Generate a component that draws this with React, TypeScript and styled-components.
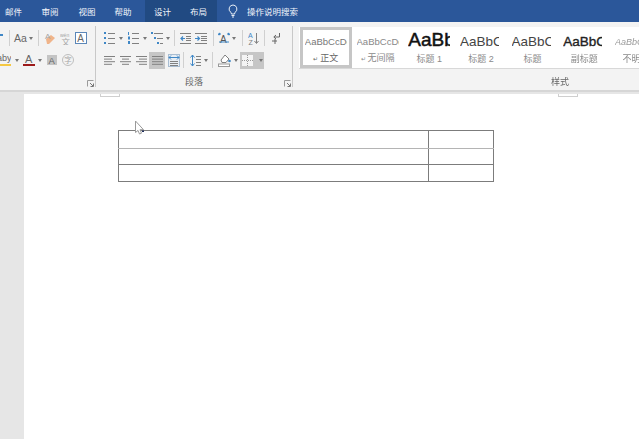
import React from "react";
import styled, { createGlobalStyle } from "styled-components";

const Global = createGlobalStyle`
  html, body {
    margin: 0;
    width: 639px;
    height: 439px;
    overflow: hidden;
    background: #fff;
    font-family: "Liberation Sans", "Noto Sans CJK SC", sans-serif;
  }
`;

const Window = styled.div`
  position: relative;
  width: 639px;
  height: 439px;
  display: flex;
  flex-direction: column;
  overflow: hidden;
`;

const TabBar = styled.div`
  height: 22px;
  flex: none;
  display: flex;
  align-items: center;
  background: #2b579a;
  color: #f2f5fa;
  font-size: 8.5px;
`;

const Tab = styled.div<{ $w: number; $active?: boolean }>`
  width: ${(p) => p.$w}px;
  height: 100%;
  display: flex;
  align-items: center;
  justify-content: center;
  background: ${(p) => (p.$active ? "#214a82" : "transparent")};
`;

const ActiveTabs = styled.div`
  display: flex;
  height: 100%;
`;

const Search = styled.div`
  display: flex;
  align-items: center;
  gap: 9px;
  margin-left: 11px;
`;

const Ribbon = styled.div`
  height: 70px;
  flex: none;
  box-sizing: border-box;
  padding-top: 4px;
  display: flex;
  background: #f3f3f3;
  border-bottom: 2px solid #d6d6d6;
  filter: blur(0.3px);
`;

const Group = styled.div<{ $w: number }>`
  width: ${(p) => p.$w}px;
  height: 61px;
  flex: none;
  box-sizing: border-box;
  border-right: 1px solid #c8c8c8;
  display: flex;
  flex-direction: column;
  overflow: hidden;
`;

const StyleGroup = styled.div`
  flex: none;
  width: 522px;
  padding-left: 6px;
  display: flex;
  flex-direction: column;
`;

const Row = styled.div<{ $pl?: number }>`
  height: 22px;
  flex: none;
  display: flex;
  align-items: center;
  padding-left: ${(p) => p.$pl ?? 0}px;
  &:first-child {
    margin-top: 1px;
  }
`;

const Footer = styled.div`
  position: relative;
  flex: 1;
  display: flex;
  align-items: center;
  justify-content: center;
  color: #666;
  font-size: 9px;
  line-height: 10px;
  padding-top: 6px;
`;

const StyleFooter = styled(Footer)`
  box-sizing: border-box;
  height: 18px;
  flex: none;
  padding-top: 8px;
`;

const Launcher = styled.svg`
  position: absolute;
  right: 1px;
  bottom: 0;
  width: 7px;
  height: 7px;
`;

const Icon = styled.svg<{ $ml?: number }>`
  flex: none;
  display: block;
  margin-left: ${(p) => p.$ml ?? 0}px;
`;

const Sep = styled.div<{ $ml: number }>`
  width: 1px;
  height: 16px;
  flex: none;
  background: #d0d0d0;
  margin-left: ${(p) => p.$ml}px;
`;

const Caret = styled.div<{ $ml: number }>`
  flex: none;
  width: 0;
  height: 0;
  margin-left: ${(p) => p.$ml}px;
  border-left: 2.5px solid transparent;
  border-right: 2.5px solid transparent;
  border-top: 3px solid #777;
`;

const FontCase = styled.div`
  width: 13px;
  margin-left: 4px;
  font-size: 10.5px;
  color: #666;
  flex: none;
`;

const Selected = styled.div<{ $ml: number; $w: number }>`
  flex: none;
  width: ${(p) => p.$w}px;
  height: 17px;
  margin-left: ${(p) => p.$ml}px;
  display: flex;
  align-items: center;
  background: #c6c6c6;
`;

const Gallery = styled.div`
  height: 42px;
  flex: none;
  display: flex;
  box-sizing: border-box;
  padding-left: 1px;
  background: #fff;
  border-bottom: 1px solid #d8d8d8;
  overflow: hidden;
  margin-top: 1px;
`;

const StyleItem = styled.div<{ $selected?: boolean }>`
  width: 51.7px;
  flex: none;
  box-sizing: border-box;
  display: flex;
  flex-direction: column;
  align-items: center;
  border: 3px solid ${(p) => (p.$selected ? "#c6c6c6" : "transparent")};
`;

const Preview = styled.div<{
  $size: number;
  $clip?: number;
  $lift?: number;
  $stroke?: number;
  $color?: string;
  $italic?: boolean;
}>`
  box-sizing: border-box;
  width: ${(p) => p.$clip ?? 42}px;
  margin-right: ${(p) => 42 - (p.$clip ?? 42)}px;
  height: 24px;
  padding-bottom: ${(p) => p.$lift ?? 0}px;
  overflow: hidden;
  white-space: nowrap;
  display: flex;
  align-items: center;
  font-size: ${(p) => p.$size}px;
  -webkit-text-stroke: ${(p) => p.$stroke ?? 0}px ${(p) => p.$color ?? "#777"};
  color: ${(p) => p.$color ?? "#777"};
  font-style: ${(p) => (p.$italic ? "italic" : "normal")};
`;

const StyleLabel = styled.div<{ $selected?: boolean }>`
  margin-top: 1px;
  font-size: 9px;
  line-height: 11px;
  color: ${(p) => (p.$selected ? "#666" : "#8a8a8a")};
  white-space: nowrap;
`;

const Mark = styled.span`
  font-size: 6px;
  margin-right: 2px;
`;

const Workspace = styled.div`
  flex: 1;
  display: flex;
  background: #e6e6e6;
  padding: 2px 0 0 24px;
  min-height: 0;
`;

const Page = styled.div`
  position: relative;
  flex: 1;
  background: #fff;
  padding: 36px 0 0 94px;
`;

const Corner = styled.div<{ $left: number }>`
  position: absolute;
  top: 0;
  left: ${(p) => p.$left}px;
  width: 18px;
  height: 2px;
  border: 1px solid #cfcfcf;
  border-top: none;
`;

const Grid = styled.table`
  border-collapse: collapse;
  table-layout: fixed;
  width: 376px;
`;

const Cell = styled.td<{ $w?: number; $h: number; $soft?: boolean }>`
  box-sizing: border-box;
  padding: 0;
  height: ${(p) => p.$h}px;
  width: ${(p) => (p.$w ? `${p.$w}px` : "auto")};
  border: 1px solid #7c7c7c;
  border-bottom-color: ${(p) => (p.$soft ? "#b4b4b4" : "#7c7c7c")};
`;

const Pointer = styled.svg`
  position: absolute;
  left: 134px;
  top: 120px;
  width: 12px;
  height: 16px;
`;

const GRAY = "#808080";
const LIGHT = "#a5a5a5";
const BLUE = "#3f87c6";

const Lines = ({ w, items }: { w: number; items: [number, number, number][] }) => (
  <>
    {items.map(([x, y, len], i) => (
      <rect key={i} x={x} y={y} width={Math.min(len, w - x)} height={1} fill={GRAY} />
    ))}
  </>
);

const AlignIcon = ({ ml, kind }: { ml: number; kind: "left" | "center" | "right" | "full" }) => {
  const rows =
    kind === "left"
      ? [[0, 11], [0, 8], [0, 11], [0, 8]]
      : kind === "center"
      ? [[0, 11], [2, 7], [0, 11], [2, 7]]
      : kind === "right"
      ? [[0, 11], [3, 8], [0, 11], [3, 8]]
      : [[0, 11], [0, 11], [0, 11], [0, 11]];
  return (
    <Icon $ml={ml} width={11} height={10} viewBox="0 0 11 10">
      {rows.map(([x, l], i) => (
        <rect key={i} x={x} y={1 + i * 2.6} width={l} height={1} fill={GRAY} />
      ))}
    </Icon>
  );
};

const Corner7 = () => (
  <Launcher viewBox="0 0 7 7">
    <path d="M.5 6.500V.5h6" fill="none" stroke="#9a9a9a" />
    <path d="M3 3l3 3M6.500 3.500v3h-3" fill="none" stroke="#777" />
  </Launcher>
);

const styles = [
  { mark: true, label: "正文", text: "AaBbCcDd", size: 9.5, selected: true },
  { mark: true, label: "无间隔", text: "AaBbCcDd", size: 9.5, color: "#888" },
  { label: "标题 1", text: "AaBb", size: 19, stroke: 0.5, color: "#111", lift: 3 },
  { label: "标题 2", text: "AaBbC", size: 13.5, clip: 39, color: "#444" },
  { label: "标题", text: "AaBbC", size: 13.5, clip: 39, color: "#444" },
  { label: "副标题", text: "AaBbC", size: 13.5, clip: 39, stroke: 0.35, color: "#222" },
  { label: "不明显", text: "AaBbCcDd", size: 9, color: "#999", italic: true },
];

export default function App() {
  return (
    <Window>
      <Global />
      <TabBar>
        <Tab $w={27}>邮件</Tab>
        <Tab $w={46}>审阅</Tab>
        <Tab $w={28}>视图</Tab>
        <Tab $w={44}>帮助</Tab>
        <ActiveTabs>
          <Tab $w={35} $active>设计</Tab>
          <Tab $w={37} $active>布局</Tab>
        </ActiveTabs>
        <Search>
          <svg width="10" height="14" viewBox="0 0 10 14">
            <path d="M5 1a4 4 0 0 0-2.300 7.200c.5.5.7 1 .7 1.800h3.200c0-.8.2-1.300.7-1.800A4 4 0 0 0 5 1z" fill="none" stroke="#e8eef6" />
            <path d="M3.500 11.500h3M4 13h2" stroke="#e8eef6" />
          </svg>
          <span>操作说明搜索</span>
        </Search>
      </TabBar>

      <Ribbon>
        <Group $w={96}>
          <Row>
            <Icon width={4} height={10} viewBox="0 0 4 10">
              <rect x={0} y={1} width={3} height={2} fill={BLUE} />
            </Icon>
            <Sep $ml={5} />
            <FontCase>Aa</FontCase>
            <Caret $ml={2} />
            <Sep $ml={5} />
            <Icon $ml={5} width={12} height={13} viewBox="0 0 12 13">
              <path d="M2 7l5-4 4 3-6 6H3z" fill="#f0b48a" />
              <text x={1} y={7} fontSize={8} fill={LIGHT}>A</text>
            </Icon>
            <Icon $ml={4} width={12} height={14} viewBox="0 0 12 14">
              <text x={0} y={5.500} fontSize={5} fill={LIGHT}>wén</text>
              <text x={1.500} y={13.500} fontSize={8.500} fill={LIGHT}>文</text>
            </Icon>
            <Icon $ml={3} width={12} height={12} viewBox="0 0 12 12">
              <rect x={0.5} y={0.5} width={11} height={11} fill="#fff" stroke="#5b87b8" />
              <text x={2.200} y={9.800} fontSize={10} fill="#666">A</text>
            </Icon>
          </Row>
          <Row>
            <Icon width={11} height={14} viewBox="0 0 11 14">
              <text x={-3} y={8} fontSize={9} fill="#666">aby</text>
              <rect x={0} y={11} width={11} height={2} fill="#f5c842" />
            </Icon>
            <Caret $ml={4} />
            <Icon $ml={4} width={12} height={14} viewBox="0 0 12 14">
              <text x={2} y={10} fontSize={11} fill="#666">A</text>
              <rect x={0} y={11} width={12} height={2} fill="#9c1a1a" />
            </Icon>
            <Caret $ml={3} />
            <Icon $ml={5} width={10} height={10} viewBox="0 0 10 10">
              <rect width={10} height={10} fill="#c4c4c4" />
              <text x={1.500} y={8.800} fontSize={9.500} fill="#666">A</text>
            </Icon>
            <Icon $ml={5} width={12} height={12} viewBox="0 0 12 12">
              <circle cx={6} cy={6} r={5.500} fill="none" stroke="#bdbdbd" />
              <text x={2.200} y={9} fontSize={7.500} fill={LIGHT}>字</text>
            </Icon>
          </Row>
          <Footer>
            <Corner7 />
          </Footer>
        </Group>

        <Group $w={197}>
          <Row $pl={8}>
            <Icon width={11} height={12} viewBox="0 0 11 12">
              <rect x={0} y={0} width={2} height={2} fill={BLUE} />
              <rect x={0} y={5} width={2} height={2} fill={BLUE} />
              <rect x={0} y={10} width={2} height={2} fill={BLUE} />
              <Lines w={11} items={[[4, 1, 7], [4, 6, 7], [4, 11, 7]]} />
            </Icon>
            <Caret $ml={4} />
            <Icon $ml={5} width={11} height={12} viewBox="0 0 11 12">
              <rect x={0} y={0} width={1} height={3} fill={BLUE} />
              <rect x={0} y={4.500} width={2} height={3} fill={BLUE} />
              <rect x={0} y={9} width={2} height={3} fill={BLUE} />
              <Lines w={11} items={[[4, 1, 7], [4, 6, 7], [4, 11, 7]]} />
            </Icon>
            <Caret $ml={4} />
            <Icon $ml={4} width={12} height={12} viewBox="0 0 12 12">
              <rect x={0} y={0} width={2} height={2} fill={BLUE} />
              <rect x={3} y={5} width={2} height={2} fill={BLUE} />
              <rect x={6} y={10} width={2} height={2} fill={BLUE} />
              <Lines w={12} items={[[3, 1, 9], [6, 6, 6], [9, 11, 3]]} />
            </Icon>
            <Caret $ml={3} />
            <Sep $ml={4} />
            <Icon $ml={5} width={11} height={11} viewBox="0 0 11 11">
              <Lines w={11} items={[[0, 0, 11], [6, 3, 5], [6, 5, 5], [6, 7, 5], [0, 10, 11]]} />
              <path d="M5 5.500H1M3 3.500l-2 2 2 2" fill="none" stroke={BLUE} strokeWidth={1.200} />
            </Icon>
            <Icon $ml={4} width={12} height={11} viewBox="0 0 12 11">
              <Lines w={12} items={[[0, 0, 12], [6, 3, 6], [6, 5, 6], [6, 7, 6], [0, 10, 12]]} />
              <path d="M0 5.500h4M2.500 3.500l2 2-2 2" fill="none" stroke={BLUE} strokeWidth={1.200} />
            </Icon>
            <Sep $ml={6} />
            <Icon $ml={4} width={12} height={12} viewBox="0 0 12 12">
              <text x={2} y={10.500} fontSize={10} fill="#555">A</text>
              <path d="M0 3l2-1.500M12 3l-2-1.500M1 10h10" stroke={BLUE} fill="none" />
              <circle cx={1.500} cy={2} r={1.200} fill={BLUE} />
              <circle cx={10.500} cy={2} r={1.200} fill={BLUE} />
            </Icon>
            <Caret $ml={2} />
            <Sep $ml={6} />
            <Icon $ml={5} width={11} height={13} viewBox="0 0 11 13">
              <text x={0} y={6} fontSize={7} fill={BLUE}>A</text>
              <text x={0.500} y={13} fontSize={7} fill={GRAY}>Z</text>
              <path d="M8.500 1v10M6.500 9l2 2.500 2-2.500" fill="none" stroke={GRAY} />
            </Icon>
            <Sep $ml={5} />
            <Icon $ml={7} width={8} height={11} viewBox="0 0 8 11">
              <path d="M7.500 0v4H2M4 2L1.800 4 4 6" fill="none" stroke="#666" />
              <path d="M0 8h5M3 6v5" stroke="#666" />
            </Icon>
          </Row>
          <Row $pl={8}>
            <AlignIcon ml={0} kind="left" />
            <AlignIcon ml={5} kind="center" />
            <AlignIcon ml={5} kind="right" />
            <Selected $ml={2} $w={16}>
              <AlignIcon ml={3} kind="full" />
            </Selected>
            <Icon $ml={3} width={12} height={13} viewBox="0 0 12 13">
              <rect x={0.5} y={0.5} width={11} height={12} fill="#e8eef4" stroke="#a8bdd2" />
              <Lines w={12} items={[[2, 7, 8], [2, 9, 8], [2, 11, 8]]} />
              <path d="M1 3.500h10M3 1.500L1 3.500l2 2M9 1.500l2 2-2 2" fill="none" stroke={BLUE} />
            </Icon>
            <Sep $ml={3} />
            <Icon $ml={6} width={11} height={13} viewBox="0 0 11 13">
              <path d="M2.500 1v11M.5 3.500l2-2.500 2 2.500M.5 9.500l2 2.500 2-2.500" fill="none" stroke={BLUE} />
              <Lines w={11} items={[[6, 2, 5], [6, 5, 5], [6, 8, 5], [6, 11, 5]]} />
            </Icon>
            <Caret $ml={3} />
            <Sep $ml={4} />
            <Icon $ml={5} width={13} height={14} viewBox="0 0 13 14">
              <path d="M3 7l4-5 4 4-3 3.500H4z" fill="#fff" stroke={GRAY} />
              <circle cx={11.500} cy={8} r={1.300} fill={BLUE} />
              <rect x={0.5} y={11} width={11} height={2.500} fill="#fff" stroke="#999" />
            </Icon>
            <Caret $ml={3} />
            <Selected $ml={2} $w={24}>
              <Icon $ml={2} width={11} height={11} viewBox="0 0 11 11">
                <rect width={11} height={11} fill="#f4f4f4" />
                <path d="M5.500 0v11M0 5.500h11" stroke="#9a9a9a" strokeDasharray="1 1" />
              </Icon>
              <Caret $ml={6} />
            </Selected>
          </Row>
          <Footer>
            段落
            <Corner7 />
          </Footer>
        </Group>

        <StyleGroup>
          <Gallery>
            {styles.map((s) => (
              <StyleItem key={s.label} $selected={s.selected}>
                <Preview
                  $size={s.size}
                  $clip={s.clip}
                  $lift={s.lift}
                  $stroke={s.stroke}
                  $color={s.color}
                  $italic={s.italic}
                >
                  {s.text}
                </Preview>
                <StyleLabel $selected={s.selected}>
                  {s.mark && <Mark>↵</Mark>}
                  {s.label}
                </StyleLabel>
              </StyleItem>
            ))}
          </Gallery>
          <StyleFooter>样式</StyleFooter>
        </StyleGroup>
      </Ribbon>

      <Workspace>
        <Page>
          <Corner $left={76} />
          <Corner $left={534} />
          <Grid>
            <tbody>
              <tr>
                <Cell $h={18} $soft />
                <Cell $h={18} $w={65} $soft />
              </tr>
              <tr>
                <Cell $h={16} />
                <Cell $h={16} />
              </tr>
              <tr>
                <Cell $h={17} />
                <Cell $h={17} />
              </tr>
            </tbody>
          </Grid>
        </Page>
      </Workspace>

      <Pointer viewBox="0 0 12 16">
        <path d="M1.500 1v11.500l2.500-2 1.500 3.500 2-.8-1.500-3.500h3.500z" fill="#fff" stroke="#9a9a9a" />
        <rect x={8} y={10.500} width={2} height={1.500} fill="#1d2d5c" />
      </Pointer>
    </Window>
  );
}
